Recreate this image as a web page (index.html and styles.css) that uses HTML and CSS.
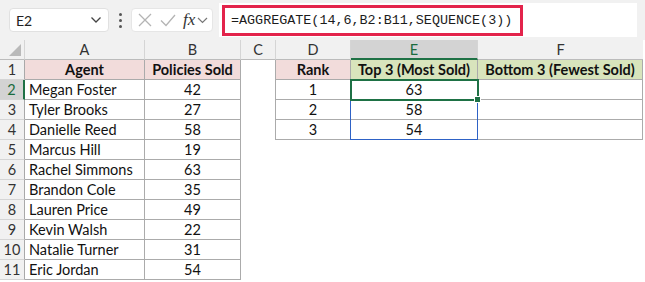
FILE: index.html
```html
<!DOCTYPE html>
<html>
<head>
<meta charset="utf-8">
<link rel="stylesheet" href="styles.css">
</head>
<body>
<div class="toolbar">
  <div class="namebox">
    <span class="nb-text">E2</span>
    <svg class="chev" width="12" height="8" viewBox="0 0 12 8"><path d="M1.5 1.5 L6 6 L10.5 1.5" fill="none" stroke="#444" stroke-width="1.3"/></svg>
  </div>
  <div class="dots"><i></i><i></i><i></i></div>
  <div class="fxbox">
    <svg width="16" height="16" viewBox="0 0 16 16" class="ic-x"><path d="M2 2 L14 14 M14 2 L2 14" stroke="#b4b4b4" stroke-width="1.3" fill="none"/></svg>
    <svg width="18" height="16" viewBox="0 0 18 16" class="ic-ok"><path d="M2 8.5 L7 13.5 L16 3" stroke="#b4b4b4" stroke-width="1.3" fill="none"/></svg>
    <span class="fx">fx</span>
    <svg class="chev2" width="11" height="7" viewBox="0 0 11 7"><path d="M1 1 L5.5 5.5 L10 1" fill="none" stroke="#777" stroke-width="1.2"/></svg>
  </div>
  <div class="formula">
    <div class="hl">=AGGREGATE(14,6,B2:B11,SEQUENCE(3))</div>
  </div>
</div>
<div class="stack">
<div class="sheet">
  <div class="ch corner"><svg width="12" height="12" viewBox="0 0 12 12"><path d="M12 0 L12 12 L0 12 Z" fill="#b9b9b9"/></svg></div>
  <div class="ch">A</div><div class="ch">B</div><div class="ch">C</div><div class="ch">D</div><div class="ch sel">E</div><div class="ch last">F</div>

  <div class="rh">1</div><div class="c hd pink">Agent</div><div class="c hd pink">Policies Sold</div><div class="gap edge"></div><div class="c hd pink">Rank</div><div class="c hd green">Top 3 (Most Sold)</div><div class="c hd green">Bottom 3 (Fewest Sold)</div>
  <div class="rh sel">2</div><div class="c l">Megan Foster</div><div class="c">42</div><div class="gap edge"></div><div class="c">1</div><div class="c">63</div><div class="c"></div>
  <div class="rh">3</div><div class="c l">Tyler Brooks</div><div class="c">27</div><div class="gap edge"></div><div class="c">2</div><div class="c">58</div><div class="c"></div>
  <div class="rh">4</div><div class="c l">Danielle Reed</div><div class="c">58</div><div class="gap edge"></div><div class="c">3</div><div class="c">54</div><div class="c"></div>
  <div class="rh">5</div><div class="c l">Marcus Hill</div><div class="c">19</div><div class="gap span4"></div>
  <div class="rh">6</div><div class="c l">Rachel Simmons</div><div class="c">63</div><div class="gap span4"></div>
  <div class="rh">7</div><div class="c l">Brandon Cole</div><div class="c">35</div><div class="gap span4"></div>
  <div class="rh">8</div><div class="c l">Lauren Price</div><div class="c">49</div><div class="gap span4"></div>
  <div class="rh">9</div><div class="c l">Kevin Walsh</div><div class="c">22</div><div class="gap span4"></div>
  <div class="rh">10</div><div class="c l">Natalie Turner</div><div class="c">31</div><div class="gap span4"></div>
  <div class="rh">11</div><div class="c l">Eric Jordan</div><div class="c">54</div><div class="gap span4"></div>
</div>
<div class="sheet overlay">
  <div class="spill"></div>
  <div class="active"><span class="handle"></span></div>
</div>
</div>
</body>
</html>
```

FILE: styles.css
```css
html, body {
  margin: 0;
  padding: 0;
  background: #ffffff;
}
body {
  width: 645px;
  height: 282px;
  overflow: hidden;
  font-family: Lato, "Open Sans", sans-serif;
}
.toolbar {
  height: 40px;
  background: #f1f1f1;
  display: flex;
  align-items: center;
  padding-left: 9px;
  box-sizing: border-box;
}
.namebox {
  width: 100px;
  height: 24px;
  box-sizing: border-box;
  background: #fff;
  border: 1px solid #e1e1e1;
  border-radius: 4px;
  display: flex;
  align-items: center;
  justify-content: space-between;
  padding: 0 6px 0 6px;
  font-size: 14px;
  color: #222;
}
.nb-text { padding-top: 1px; }
.dots {
  width: 22px;
  display: flex;
  flex-direction: column;
  align-items: center;
  gap: 3px;
}
.dots i {
  width: 3px;
  height: 3px;
  border-radius: 50%;
  background: #555;
}
.fxbox {
  width: 82px;
  height: 24px;
  box-sizing: border-box;
  background: #fff;
  border: 1px solid #e6e6e6;
  border-radius: 4px;
  display: flex;
  align-items: center;
  padding-left: 5px;
}
.ic-x { margin-right: 6px; }
.ic-ok { margin-right: 6px; }
.fx {
  font-family: "Liberation Serif", serif;
  font-style: italic;
  font-size: 17px;
  color: #333;
  margin-right: 2px;
}
.chev2 { margin-top: 1px; }
.formula {
  margin-left: 6px;
  width: 418px;
  height: 34px;
  box-sizing: border-box;
  background: #fff;
  display: flex;
  align-items: center;
  padding-left: 3px;
}
.hl {
  width: 301px;
  height: 31px;
  box-sizing: border-box;
  border: 3px solid #e3234b;
  font-family: "Liberation Mono", monospace;
  font-size: 13.4px;
  color: #1c1c1c;
  padding-left: 6px;
  display: flex;
  align-items: center;
}
.stack {
  display: grid;
}
.stack > .sheet {
  grid-area: 1 / 1;
}
.sheet {
  display: grid;
  grid-template-columns: 25px 120px 96px 35px 75px 127px 165px;
  grid-template-rows: repeat(12, 20px);
  font-size: 14.5px;
  color: #111;
}
.overlay {
  pointer-events: none;
}
.ch {
  background: #f1f1f1;
  border-right: 1px solid #d5d5d5;
  border-bottom: 1px solid #bcbcbc;
  box-sizing: border-box;
  display: flex;
  align-items: center;
  justify-content: center;
  color: #333;
  font-size: 14.5px;
}
.ch.last { border-right: none; }
.ch.corner {
  justify-content: flex-end;
  align-items: flex-end;
  padding: 0 3px 3px 0;
}
.ch.sel {
  background: #d3d3d3;
  color: #1b6c3e;
  border-bottom: 2px solid #1e7145;
}
.rh {
  background: #f1f1f1;
  border-bottom: 1px solid #d5d5d5;
  border-right: 1px solid #a9a9a9;
  box-sizing: border-box;
  display: flex;
  align-items: center;
  justify-content: center;
  color: #333;
  font-size: 14.5px;
}
.rh.sel {
  background: #d3d3d3;
  color: #1b6c3e;
  border-right: 2px solid #1e7145;
}
.c {
  box-sizing: border-box;
  border-right: 1px solid #ababab;
  border-bottom: 1px solid #ababab;
  display: flex;
  align-items: center;
  justify-content: center;
  white-space: nowrap;
  overflow: hidden;
}
.c.l {
  justify-content: flex-start;
  padding-left: 4px;
}
.hd { font-weight: bold; }
.pink { background: #f2dcdb; }
.green { background: #d8e4bc; }
.gap { box-sizing: border-box; }
.gap.edge { border-right: 1px solid #ababab; }
.gap.span4 { grid-column: span 4; }
.spill {
  grid-column: 6;
  grid-row: 3 / span 3;
  margin: -1px 0 0 -1px;
  border: 1px solid #2e62c6;
}
.active {
  grid-column: 6;
  grid-row: 3;
  margin: -1px -1px -1px -1px;
  border: 2px solid #1e7145;
  position: relative;
}
.handle {
  position: absolute;
  right: -4px;
  bottom: -4px;
  width: 5px;
  height: 5px;
  background: #1e7145;
  border: 1px solid #fff;
}
```
